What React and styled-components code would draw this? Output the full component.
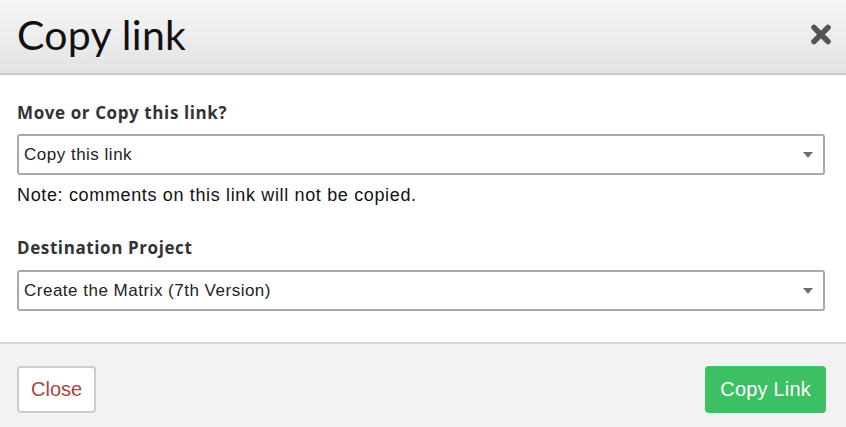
import React from 'react';
import styled, { createGlobalStyle } from 'styled-components';

const GlobalStyle = createGlobalStyle`
    html, body {
        margin: 0;
        padding: 0;
        background: #ffffff;
    }
    * {
        box-sizing: border-box;
    }
`;

const Modal = styled.div`
    width: 846px;
    height: 427px;
    display: flex;
    flex-direction: column;
    background: #ffffff;
    font-family: "Liberation Sans", Arial, sans-serif;
    color: #333;
    overflow: hidden;
`;

const Header = styled.div`
    height: 75px;
    flex: none;
    display: flex;
    align-items: center;
    justify-content: space-between;
    padding: 0 14px 4px 17px;
    background: linear-gradient(to bottom, #f6f6f6, #e3e3e3);
    border-bottom: 2px solid #c9c9c9;
`;

const Title = styled.h1`
    margin: 0;
    font-family: Lato, "Open Sans", sans-serif;
    font-weight: 400;
    font-size: 41px;
    letter-spacing: 0.3px;
    line-height: 48px;
    color: #111;
`;

const CloseIcon = styled.button`
    border: none;
    background: none;
    padding: 0;
    width: 22px;
    height: 22px;
    display: grid;
    place-items: center;
    cursor: pointer;
`;

const Body = styled.div`
    flex: 1;
    padding: 26px 21px 31px 17px;
`;

const Group = styled.div`
    & + & {
        margin-top: 29px;
    }
`;

const Label = styled.label`
    display: block;
    font-family: "Open Sans", Lato, sans-serif;
    font-weight: 700;
    font-size: 17px;
    letter-spacing: 0.6px;
    line-height: 24px;
    color: #333;
    margin-bottom: ${p => p.gap || 9}px;
`;

const SelectBox = styled.div`
    height: 41px;
    display: flex;
    align-items: center;
    justify-content: space-between;
    padding: 0 10px 0 5px;
    border: 2px solid #a9a9a9;
    border-radius: 3px;
    background: #fff;
    font-size: 17px;
    letter-spacing: 0.5px;
    color: #222;
`;

const Note = styled.p`
    margin: 8px 0 0;
    font-size: 18px;
    letter-spacing: 0.65px;
    line-height: 24px;
    color: #111;
`;

const Footer = styled.div`
    height: 86px;
    flex: none;
    display: flex;
    align-items: flex-start;
    justify-content: space-between;
    padding: 22px 20px 0 17px;
    background: #f2f2f2;
    border-top: 2px solid #d6d6d6;
`;

const Button = styled.button`
    height: 47px;
    padding: 0 ${p => (p.primary ? 15 : 12)}px;
    border-radius: 4px;
    font-family: "Liberation Sans", Arial, sans-serif;
    font-size: 20px;
    letter-spacing: ${p => (p.primary ? 0.2 : 0)}px;
    cursor: pointer;
    border: ${p => (p.primary ? 'none' : '2px solid #cccccc')};
    background: ${p => (p.primary ? '#3dbf63' : '#ffffff')};
    color: ${p => (p.primary ? '#ffffff' : '#a94442')};
`;

const Caret = () => (
    <svg width="10" height="6" viewBox="0 0 10 6">
        <path d="M0 0 H10 L5 6 Z" fill="#6f6f6f" />
    </svg>
);

const Select = ({ value }) => (
    <SelectBox>
        <span>{value}</span>
        <Caret />
    </SelectBox>
);

export default function App() {
    return (
        <>
            <GlobalStyle />
            <Modal>
                <Header>
                    <Title>Copy link</Title>
                    <CloseIcon aria-label="Close">
                        <svg width="22" height="21" viewBox="0 0 22 21">
                            <path d="M4 3.5 L18 17.5 M18 3.5 L4 17.5" stroke="#555" strokeWidth="5.5" strokeLinecap="round" />
                        </svg>
                    </CloseIcon>
                </Header>
                <Body>
                    <Group>
                        <Label>Move or Copy this link?</Label>
                        <Select value="Copy this link" />
                        <Note>Note: comments on this link will not be copied.</Note>
                    </Group>
                    <Group>
                        <Label gap={10}>Destination Project</Label>
                        <Select value="Create the Matrix (7th Version)" />
                    </Group>
                </Body>
                <Footer>
                    <Button>Close</Button>
                    <Button primary>Copy Link</Button>
                </Footer>
            </Modal>
        </>
    );
}
